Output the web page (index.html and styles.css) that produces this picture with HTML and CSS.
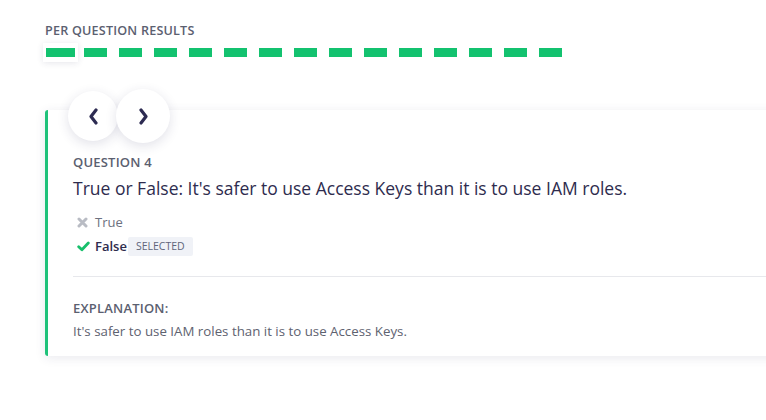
FILE: index.html
```html
<!DOCTYPE html>
<html>
<head>
<meta charset="utf-8">
<link rel="stylesheet" href="styles.css">
</head>
<body>
<div class="page">
  <div class="results-label">PER QUESTION RESULTS</div>
  <div class="dashes">
    <span class="cell selected"><i></i></span>
    <span class="cell"><i></i></span>
    <span class="cell"><i></i></span>
    <span class="cell"><i></i></span>
    <span class="cell"><i></i></span>
    <span class="cell"><i></i></span>
    <span class="cell"><i></i></span>
    <span class="cell"><i></i></span>
    <span class="cell"><i></i></span>
    <span class="cell"><i></i></span>
    <span class="cell"><i></i></span>
    <span class="cell"><i></i></span>
    <span class="cell"><i></i></span>
    <span class="cell"><i></i></span>
    <span class="cell"><i></i></span>
  </div>
  <div class="card">
    <div class="nav">
      <button class="nav-btn prev"><svg width="11" height="17" viewBox="0 0 11 17"><polyline points="8,2 3,8.5 8,15" fill="none" stroke="#2d2b52" stroke-width="3.2" stroke-linecap="round" stroke-linejoin="round"/></svg></button>
      <button class="nav-btn next"><svg width="11" height="17" viewBox="0 0 11 17"><polyline points="3,2 8,8.5 3,15" fill="none" stroke="#2d2b52" stroke-width="3.2" stroke-linecap="round" stroke-linejoin="round"/></svg></button>
    </div>
    <div class="q-label">QUESTION 4</div>
    <div class="q-title">True or False: It's safer to use Access Keys than it is to use IAM roles.</div>
    <ul class="options">
      <li class="opt wrong"><span class="icon x"><svg width="11" height="11" viewBox="0 0 11 11"><path d="M2 2 L9 9 M9 2 L2 9" fill="none" stroke="#b9bcc4" stroke-width="3" stroke-linecap="round"/></svg></span><span>True</span></li>
      <li class="opt right"><span class="icon check"><svg width="13" height="11" viewBox="0 0 13 11"><polyline points="1.7,5.7 4.9,8.8 11.3,2" fill="none" stroke="#17bf6b" stroke-width="2.8" stroke-linecap="round" stroke-linejoin="round"/></svg></span><span class="opt-text">False</span><span class="badge">SELECTED</span></li>
    </ul>
    <div class="divider"></div>
    <div class="exp-label">EXPLANATION:</div>
    <div class="exp-text">It's safer to use IAM roles than it is to use Access Keys.</div>
  </div>
</div>
</body>
</html>
```

FILE: styles.css
```css
html, body {
  margin: 0;
  padding: 0;
  background: #ffffff;
  overflow: hidden;
}
body {
  font-family: "Open Sans", "Noto Sans", sans-serif;
  width: 766px;
  height: 420px;
}
.page {
  padding: 22px 0 0 45px;
}
.results-label {
  font-size: 12.6px;
  font-weight: 600;
  color: #5b6070;
  letter-spacing: 0.2px;
  line-height: 17px;
}
.dashes {
  display: flex;
  margin-top: 4px;
  margin-left: -2px;
}
.cell {
  width: 35px;
  box-sizing: border-box;
  padding: 5px 6px;
  display: block;
}
.cell i {
  display: block;
  height: 9px;
  background: #13c26f;
}
.cell.selected {
  padding: 5px 3px;
  background: #fff;
  box-shadow: 0 1px 6px rgba(40, 40, 80, 0.12);
}
.card {
  position: relative;
  margin-top: 48px;
  width: 760px;
  background: #fff;
  border-left: 3px solid #1fc27a;
  border-radius: 3px 0 0 3px;
  box-shadow: 0 2px 11px rgba(40, 40, 90, 0.1);
  padding: 44px 0 16px 25px;
}
.nav {
  position: absolute;
  left: 20px;
  top: -21px;
  display: flex;
  align-items: center;
}
.nav-btn {
  border: none;
  background: #fff;
  border-radius: 50%;
  display: flex;
  align-items: center;
  justify-content: center;
  padding: 0;
  box-shadow: 0 3px 12px rgba(40, 40, 90, 0.14);
}
.nav-btn.prev {
  width: 50px;
  height: 50px;
}
.nav-btn.next {
  width: 54px;
  height: 54px;
  margin-left: -2px;
}
.q-label {
  font-size: 13px;
  font-weight: 600;
  color: #5b6070;
  line-height: 17px;
  letter-spacing: 0.2px;
}
.q-title {
  margin-top: 6px;
  font-size: 17.5px;
  font-weight: 500;
  color: #2e2c4e;
  line-height: 22px;
}
.options {
  list-style: none;
  margin: 11px 0 0 0;
  padding: 0 0 0 4px;
}
.opt {
  display: flex;
  align-items: center;
  font-size: 13px;
  height: 24px;
}
.icon {
  width: 18px;
  display: flex;
  align-items: center;
}
.wrong {
  color: #6d7180;
}
.right .opt-text {
  font-weight: 600;
  color: #2e2c4e;
}
.badge {
  margin-left: 1px;
  background: #f0f2f7;
  color: #60657a;
  font-size: 10.5px;
  padding: 3px 8px;
  line-height: 13px;
  border-radius: 2px;
}
.divider {
  margin-top: 18px;
  height: 1px;
  background: #e7e8ec;
}
.exp-label {
  margin-top: 23px;
  font-size: 13px;
  font-weight: 600;
  color: #5b6070;
  line-height: 17px;
  letter-spacing: 0.2px;
}
.exp-text {
  margin-top: 5px;
  font-size: 13.3px;
  color: #5e6270;
  line-height: 18px;
}
```
